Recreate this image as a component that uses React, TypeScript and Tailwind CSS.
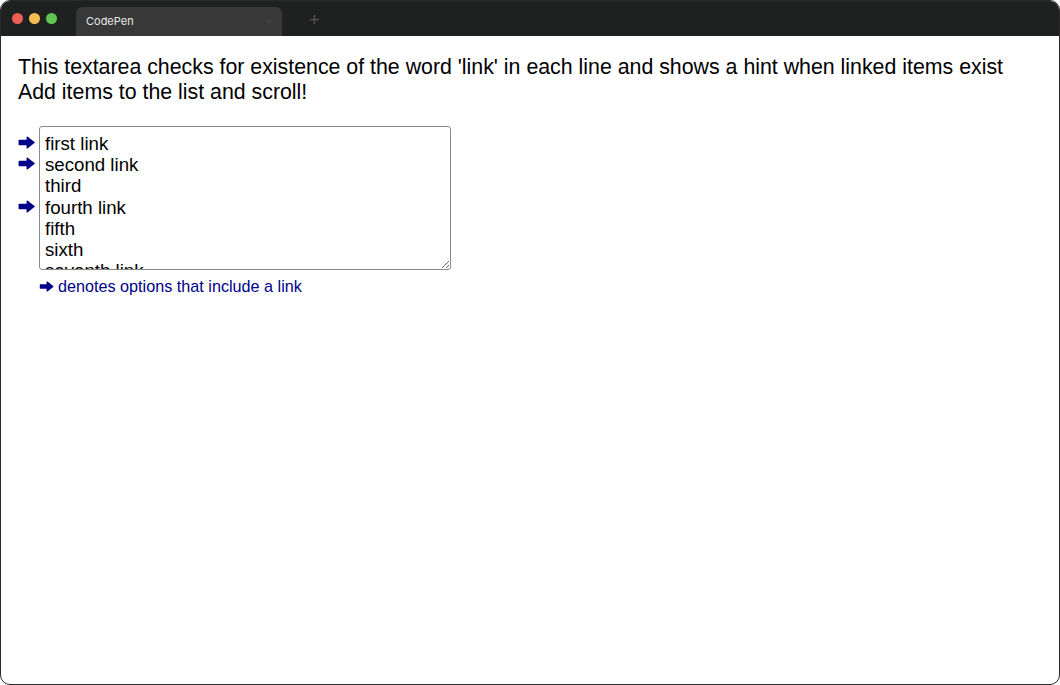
import React from "react";

const Arrow = ({ w = 17, h = 13 }: { w?: number; h?: number }) => (
  <svg width={w} height={h} viewBox="0 0 17 13" className="block">
    <path
      d="M1.3 4.6 H9.3 V1.3 L16 6.5 L9.3 11.7 V8.4 H1.3 Z"
      fill="#00008b"
      stroke="#00008b"
      strokeWidth="1.5"
      strokeLinejoin="round"
    />
  </svg>
);

const lines = ["first link", "second link", "third", "fourth link", "fifth", "sixth", "seventh link", "eighth", "ninth link", "tenth"];

export default function App() {
  return (
    <div className="w-[1060px] h-[685px] bg-white">
      <div className="w-full h-full rounded-[10px] border border-[#2a2a2a] overflow-hidden flex flex-col bg-white">
        <div className="h-[35px] bg-[#1f2020] flex items-end shrink-0 relative">
          <div className="absolute left-[11px] top-[12px] flex gap-[6px]">
            <div className="w-[11px] h-[11px] rounded-full bg-[#ec5f57]" />
            <div className="w-[11px] h-[11px] rounded-full bg-[#f4bd4f]" />
            <div className="w-[11px] h-[11px] rounded-full bg-[#5fc653]" />
          </div>
          <div className="ml-[75px] w-[206px] h-[29px] bg-[#383838] rounded-t-[6px] flex items-center px-[10px] justify-between">
            <span className="text-[11px] text-[#e8e8e8]" style={{ fontFamily: "Inter, 'Liberation Sans', sans-serif" }}>CodePen</span>
            <span className="text-[10px] text-[#444]">×</span>
          </div>
          <div className="ml-[27px] mb-[7px] text-[#555] text-[18px] leading-none font-light" style={{ fontFamily: "'Liberation Sans', sans-serif" }}>+</div>
        </div>
        <div className="flex-1 px-[17px] pt-[19px] text-black" style={{ fontFamily: "'Liberation Sans', Arial, sans-serif" }}>
          <p className="text-[21.33px] leading-[25px]">
            This textarea checks for existence of the word 'link' in each line and shows a hint when linked items exist
          </p>
          <p className="text-[21.33px] leading-[25px]">Add items to the list and scroll!</p>
          <div className="mt-[21px] flex items-start">
            <div className="w-[21px] pt-[6px] h-[144px] overflow-hidden">
              {lines.slice(0, 6).map((l, i) => (
                <div key={i} className="h-[21.2px] flex items-center">
                  {l.includes("link") ? <Arrow /> : null}
                </div>
              ))}
            </div>
            <textarea
              className="w-[412px] h-[144px] border border-[#8a8a8a] rounded-[3px] px-[5px] pt-[6px] text-[18.67px] leading-[21.2px] text-black resize-y outline-none overflow-hidden"
              style={{ fontFamily: "'Liberation Sans', Arial, sans-serif" }}
              defaultValue={lines.join("\n")}
            />
          </div>
          <div className="ml-[21px] mt-[4px] flex items-center gap-[4px] text-[16.2px] text-[#00008b]">
            <Arrow w={15} h={11} />
            <span>denotes options that include a link</span>
          </div>
        </div>
      </div>
    </div>
  );
}
